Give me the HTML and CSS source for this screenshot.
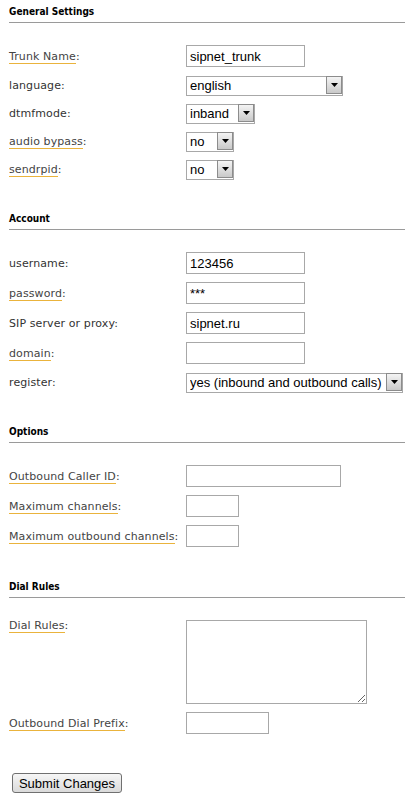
FILE: index.html
```html
<!DOCTYPE html>
<html>
<head>
<meta charset="utf-8">
<link rel="stylesheet" href="styles.css">
</head>
<body>
<form class="page">
  <section class="section">
    <h2 class="section-title">General Settings</h2>
    <div class="fields">
      <label class="field-label"><span class="hint">Trunk Name</span>:</label>
      <input class="text w-119" type="text" value="sipnet_trunk">

      <label class="field-label">language:</label>
      <span class="select w-157"><select><option>english</option></select><span class="select-arrow"><svg width="7" height="4" viewBox="0 0 7 4"><path d="M0 0H7L3.5 4Z" fill="#000"/></svg></span></span>

      <label class="field-label">dtmfmode:</label>
      <span class="select w-69"><select><option>inband</option></select><span class="select-arrow"><svg width="7" height="4" viewBox="0 0 7 4"><path d="M0 0H7L3.5 4Z" fill="#000"/></svg></span></span>

      <label class="field-label"><span class="hint">audio bypass</span>:</label>
      <span class="select w-48"><select><option>no</option></select><span class="select-arrow"><svg width="7" height="4" viewBox="0 0 7 4"><path d="M0 0H7L3.5 4Z" fill="#000"/></svg></span></span>

      <label class="field-label"><span class="hint">sendrpid</span>:</label>
      <span class="select w-48"><select><option>no</option></select><span class="select-arrow"><svg width="7" height="4" viewBox="0 0 7 4"><path d="M0 0H7L3.5 4Z" fill="#000"/></svg></span></span>
    </div>
  </section>

  <section class="section">
    <h2 class="section-title">Account</h2>
    <div class="fields">
      <label class="field-label">username:</label>
      <input class="text w-119" type="text" value="123456">

      <label class="field-label"><span class="hint">password</span>:</label>
      <input class="text w-119" type="text" value="***">

      <label class="field-label">SIP server or proxy:</label>
      <input class="text w-119" type="text" value="sipnet.ru">

      <label class="field-label"><span class="hint">domain</span>:</label>
      <input class="text w-119" type="text" value="">

      <label class="field-label">register:</label>
      <span class="select w-217"><select><option>yes (inbound and outbound calls)</option></select><span class="select-arrow"><svg width="7" height="4" viewBox="0 0 7 4"><path d="M0 0H7L3.5 4Z" fill="#000"/></svg></span></span>
    </div>
  </section>

  <section class="section">
    <h2 class="section-title">Options</h2>
    <div class="fields">
      <label class="field-label"><span class="hint">Outbound Caller ID</span>:</label>
      <input class="text w-155" type="text" value="">

      <label class="field-label"><span class="hint">Maximum channels</span>:</label>
      <input class="text w-53" type="text" value="">

      <label class="field-label"><span class="hint">Maximum outbound channels</span>:</label>
      <input class="text w-53" type="text" value="">
    </div>
  </section>

  <section class="section">
    <h2 class="section-title">Dial Rules</h2>
    <div class="fields">
      <label class="field-label field-label-top"><span class="hint">Dial Rules</span>:</label>
      <textarea class="area"></textarea>

      <label class="field-label"><span class="hint">Outbound Dial Prefix</span>:</label>
      <input class="text w-83" type="text" value="">
    </div>
  </section>

  <button class="submit" type="button">Submit Changes</button>
</form>
</body>
</html>
```

FILE: styles.css
```css
html, body {
  margin: 0;
  padding: 0;
  background: #fff;
}

body {
  width: 416px;
  font-family: "DejaVu Sans", Verdana, sans-serif;
  color: #333;
}

.page {
  padding: 5px 11px 0 9px;
}

.section + .section {
  margin-top: 33px;
}

.section-title {
  margin: 0 0 22px 0;
  padding: 0 0 3px 0;
  font-family: "DejaVu Sans Condensed", "DejaVu Sans", sans-serif;
  font-weight: bold;
  font-size: 10px;
  line-height: 14px;
  color: #000;
  border-bottom: 1px solid #9a9a9a;
}

.fields {
  display: grid;
  grid-template-columns: 177px auto;
  row-gap: 8px;
  align-items: center;
  justify-items: start;
}

.field-label {
  font-size: 11px;
  line-height: 14px;
  letter-spacing: 0.1px;
  color: #333;
  white-space: nowrap;
  padding-top: 1px;
}

.field-label-top {
  align-self: start;
  margin-top: -2px;
}

.hint {
  color: #444;
  border-bottom: 1px solid #eab33c;
}

.text {
  box-sizing: border-box;
  height: 22px;
  margin: 0;
  padding: 0 3px;
  border: 1px solid #a8a8a8;
  border-radius: 0;
  font-family: "Liberation Sans", Arial, sans-serif;
  font-size: 13px;
  color: #000;
  background: #fff;
  outline: none;
}

.w-119 { width: 119px; }
.w-155 { width: 155px; }
.w-53 { width: 53px; }
.w-83 { width: 83px; }

.select {
  position: relative;
  display: inline-block;
  height: 20px;
}

.w-157 { width: 157px; }
.w-69 { width: 69px; }
.w-48 { width: 48px; }
.w-217 { width: 217px; }

.select select {
  -webkit-appearance: none;
  appearance: none;
  box-sizing: border-box;
  width: 100%;
  height: 20px;
  margin: 0;
  padding: 0 18px 0 3px;
  border: 1px solid #a8a8a8;
  border-radius: 0;
  background: #fff;
  font-family: "Liberation Sans", Arial, sans-serif;
  font-size: 13px;
  color: #000;
  outline: none;
}

.select-arrow {
  position: absolute;
  top: 1px;
  right: 1px;
  box-sizing: border-box;
  width: 16px;
  height: 18px;
  border: 1px solid #8c8c8c;
  background: linear-gradient(#f4f4f4, #c9c9c9);
  display: flex;
  align-items: center;
  justify-content: center;
  pointer-events: none;
}

.select-arrow svg {
  display: block;
}

.area {
  box-sizing: border-box;
  width: 181px;
  height: 84px;
  margin: 0;
  padding: 2px 3px;
  border: 1px solid #a8a8a8;
  border-radius: 0;
  font-family: "Liberation Sans", Arial, sans-serif;
  font-size: 13px;
  outline: none;
}

.submit {
  display: block;
  box-sizing: border-box;
  width: 110px;
  height: 20px;
  margin: 39px 0 0 3px;
  padding: 0;
  border: 1px solid #707070;
  border-radius: 3px;
  background: linear-gradient(#f6f6f6, #dadada);
  font-family: "Liberation Sans", Arial, sans-serif;
  font-size: 13px;
  color: #000;
}
```
